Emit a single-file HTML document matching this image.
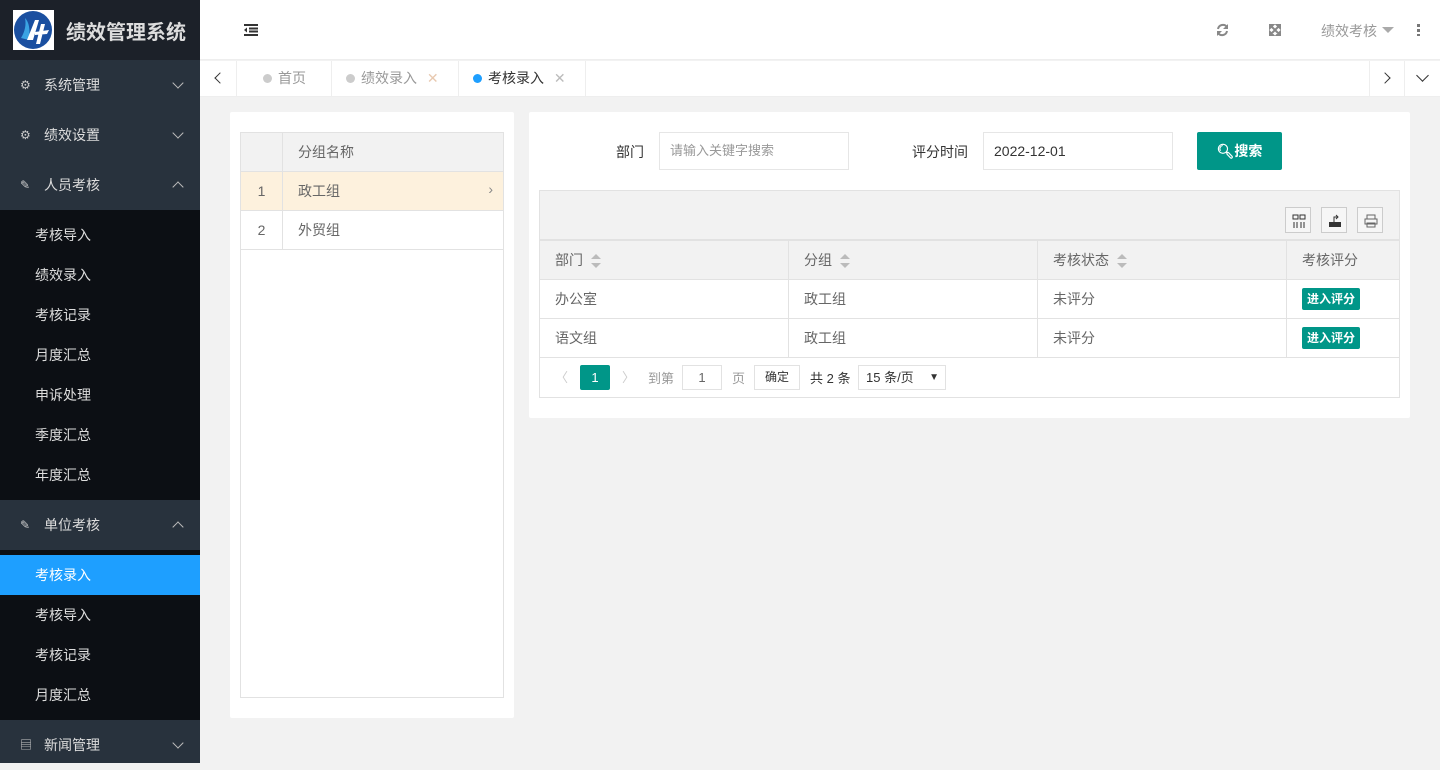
<!DOCTYPE html>
<html><head><meta charset="utf-8"><style>
*{box-sizing:border-box;margin:0;padding:0}
body{width:1440px;height:763px;overflow:hidden;font-family:"Liberation Sans","Noto Sans CJK SC",sans-serif;font-size:14px;background:#f2f2f2;position:relative;color:#666}
.side{position:absolute;left:0;top:0;width:200px;height:763px;background:#28323d}
.logo{height:60px;background:#1c2129;display:flex;align-items:center;padding-left:13px}
.logo .img{width:41px;height:40px;background:#fff;position:relative;overflow:hidden}
.logo span{color:#ddd;font-size:20px;font-weight:bold;margin-left:12px;letter-spacing:0}
.par{height:50px;display:flex;align-items:center;padding-left:20px;color:#ddd;position:relative}
.par i{display:inline-block;width:12px;height:12px;margin-right:12px;color:#ccc;font-style:normal;font-size:12px;line-height:12px}
.par .ar{position:absolute;right:18px;top:19px;width:8px;height:8px;border-right:1px solid #bbb;border-bottom:1px solid #bbb;transform:rotate(45deg)}
.par .up{top:23px;transform:rotate(-135deg)}
.sub{background:#0c0f14;padding:5px 0}
.sub div{height:40px;line-height:40px;padding-left:35px;color:#ddd}
.sub .act{background:#1e9fff;color:#fff}
.top{position:absolute;left:200px;top:0;right:0;height:60px;background:#fff;border-bottom:1px solid #eee}
.tabs{position:absolute;left:200px;top:61px;right:0;height:36px;background:#fff;border-bottom:1px solid #eee}
.tab{position:absolute;top:0;height:35px;line-height:35px;color:#999;font-size:14px;border-right:1px solid #eee}
.dot{display:inline-block;width:9px;height:9px;border-radius:50%;background:#ccc;margin-right:6px}
.card{position:absolute;background:#fff;border-radius:2px}
table{border-collapse:collapse}
td,th{border:1px solid #e2e2e2;font-weight:normal;text-align:left;color:#666;height:39px}
.btn{display:inline-block;background:#009688;color:#fff;font-size:12px;font-weight:bold;padding:0 5px;height:22px;line-height:22px;border-radius:2px}
.inp{position:absolute;height:38px;border:1px solid #e6e6e6;line-height:36px;padding-left:10px}
.sort{display:inline-block;vertical-align:middle;margin-left:8px;width:10px;height:14px;position:relative}
.sort:before{content:"";position:absolute;top:0;left:0;border:5px solid transparent;border-bottom:5px solid #bbb;border-top:0}
.sort:after{content:"";position:absolute;bottom:0;left:0;border:5px solid transparent;border-top:5px solid #bbb;border-bottom:0}
.ib{position:absolute;top:16px;width:26px;height:26px;border:1px solid #ccc;background:#f6f6f6}
.ib svg{position:absolute;left:6px;top:6px}
</style></head><body>
<div class="side">
 <div class="logo"><div class="img"><svg width="41" height="40"><circle cx="20" cy="20" r="19" fill="#1a4fa0"/><path d="M8 28 Q14 18 12 8 Q18 14 16 30Z" fill="#3aa3e3"/><path d="M14 30 L22 10 L26 10 L20 30Z M22 22 L36 20 L34 24 L22 25Z M28 14 L32 14 L27 34 L23 34Z" fill="#fff"/></svg></div><span>绩效管理系统</span></div>
 <div class="par"><i>⚙</i>系统管理<b class="ar"></b></div>
 <div class="par"><i>⚙</i>绩效设置<b class="ar"></b></div>
 <div class="par"><i>✎</i>人员考核<b class="ar up"></b></div>
 <div class="sub"><div>考核导入</div><div>绩效录入</div><div>考核记录</div><div>月度汇总</div><div>申诉处理</div><div>季度汇总</div><div>年度汇总</div></div>
 <div class="par"><i>✎</i>单位考核<b class="ar up"></b></div>
 <div class="sub"><div class="act">考核录入</div><div>考核导入</div><div>考核记录</div><div>月度汇总</div></div>
 <div class="par"><i>▤</i>新闻管理<b class="ar"></b></div>
</div>
<div class="top">
 <svg style="position:absolute;left:44px;top:24px" width="14" height="12"><path d="M0 1h14M5 4.5h9M5 7.5h9M0 11h14" stroke="#333" stroke-width="2"/><path d="M0 6l3-2.5v5z" fill="#333"/></svg>
 <svg style="position:absolute;left:1016px;top:23px" width="13" height="14"><path d="M2 6a5 5 0 0 1 9-2M11 8a5 5 0 0 1-9 2" stroke="#888" stroke-width="2" fill="none"/><path d="M12 1v5h-5zM1 13v-5h5z" fill="#888"/></svg>
 <svg style="position:absolute;left:1069px;top:24px" width="12" height="12"><path d="M0 0h5l-5 5zM12 0v5l-5-5zM0 12v-5l5 5zM12 12h-5l5-5z M2 2l8 8M10 2l-8 8" fill="#888" stroke="#888" stroke-width="2"/></svg>
 <span style="position:absolute;left:1121px;top:21px;color:#999;font-size:14px">绩效考核</span>
 <span style="position:absolute;left:1182px;top:27px;border:6px solid transparent;border-top:6px solid #aaa"></span>
 <span style="position:absolute;left:1217px;top:24px;width:3px;height:12px;background:repeating-linear-gradient(#777 0 3px,transparent 3px 5px)"></span>
</div>
<div class="tabs">
 <div class="tab" style="left:0;width:37px"><span style="position:absolute;left:16px;top:13px;width:8px;height:8px;border-left:1.5px solid #333;border-bottom:1.5px solid #333;transform:rotate(45deg)"></span></div>
 <div class="tab" style="left:37px;width:95px;padding-left:26px"><span class="dot"></span>首页</div>
 <div class="tab" style="left:132px;width:127px;padding-left:14px"><span class="dot"></span>绩效录入 <span style="color:#e8c9b0;margin-left:6px">✕</span></div>
 <div class="tab" style="left:259px;width:127px;padding-left:14px;color:#333"><span class="dot" style="background:#1e9fff"></span>考核录入 <span style="color:#bbb;margin-left:6px">✕</span></div>
 <div class="tab" style="left:1169px;width:36px;border-left:1px solid #eee"><span style="position:absolute;left:11px;top:13px;width:8px;height:8px;border-right:1.5px solid #333;border-top:1.5px solid #333;transform:rotate(45deg)"></span></div>
 <div class="tab" style="left:1205px;width:35px;border-right:0"><span style="position:absolute;left:13px;top:10px;width:9px;height:9px;border-right:1.5px solid #333;border-bottom:1.5px solid #333;transform:rotate(45deg)"></span></div>
</div>
<div class="card" style="left:230px;top:112px;width:284px;height:606px">
 <table style="position:absolute;left:10px;top:20px;width:264px">
  <tr style="background:#f2f2f2"><th style="width:42px"></th><th style="padding-left:15px">分组名称</th></tr>
  <tr style="background:#fdf1dd"><td style="text-align:center">1</td><td style="padding-left:15px;position:relative">政工组<span style="position:absolute;right:10px;color:#888">›</span></td></tr>
  <tr><td style="text-align:center">2</td><td style="padding-left:15px">外贸组</td></tr>
 </table>
 <div style="position:absolute;left:10px;top:137px;width:264px;height:449px;border:1px solid #e2e2e2;border-top:0"></div>
</div>
<div class="card" style="left:529px;top:112px;width:881px;height:306px">
 <span style="position:absolute;left:87px;top:30px;color:#333">部门</span>
 <div class="inp" style="left:130px;top:20px;width:190px;color:#999;font-size:13px">请输入关键字搜索</div>
 <span style="position:absolute;left:383px;top:30px;color:#333">评分时间</span>
 <div class="inp" style="left:454px;top:20px;width:190px;color:#333">2022-12-01</div>
 <div style="position:absolute;left:668px;top:20px;width:85px;height:38px;background:#009688;color:#fff;border-radius:2px;line-height:38px;text-align:center;font-weight:bold">&#x1F50D;&#xFE0E;搜索</div>
 <div style="position:absolute;left:10px;top:78px;width:861px;height:50px;background:#f2f2f2;border:1px solid #e2e2e2">
  <div class="ib" style="left:745px"><svg width="14" height="14"><path d="M1 1h5v4h-5zM8 1h5v4h-5zM2 8v6M5 8v6M9 8v6M12 8v6" stroke="#333" fill="none"/></svg></div>
  <div class="ib" style="left:781px"><svg width="14" height="14"><path d="M1 8h12v5h-12z" fill="#333"/><path d="M6 8v-5h4M8 1l2 2-2 2" stroke="#333" fill="none"/></svg></div>
  <div class="ib" style="left:817px"><svg width="14" height="14"><path d="M3 5v-4h8v4M1 5h12v5h-12zM3 9h8v4h-8z" stroke="#666" fill="none"/></svg></div>
 </div>
 <table style="position:absolute;left:10px;top:128px;width:861px">
  <tr style="background:#f2f2f2"><th style="width:249px;padding-left:15px">部门<span class="sort"></span></th><th style="width:249px;padding-left:15px">分组<span class="sort"></span></th><th style="width:249px;padding-left:15px">考核状态<span class="sort"></span></th><th style="padding-left:15px">考核评分</th></tr>
  <tr><td style="padding-left:15px">办公室</td><td style="padding-left:15px">政工组</td><td style="padding-left:15px">未评分</td><td style="padding-left:15px"><span class="btn">进入评分</span></td></tr>
  <tr><td style="padding-left:15px">语文组</td><td style="padding-left:15px">政工组</td><td style="padding-left:15px">未评分</td><td style="padding-left:15px"><span class="btn">进入评分</span></td></tr>
 </table>
 <div style="position:absolute;left:10px;top:245px;width:861px;height:41px;border:1px solid #e2e2e2;border-top:0;font-size:13px">
  <span style="position:absolute;left:15px;top:10px;color:#ccc">〈</span>
  <span style="position:absolute;left:40px;top:8px;width:30px;height:25px;background:#009688;color:#fff;text-align:center;line-height:25px;border-radius:2px">1</span>
  <span style="position:absolute;left:82px;top:10px;color:#ccc">〉</span>
  <span style="position:absolute;left:108px;top:11px;color:#999">到第</span>
  <span style="position:absolute;left:142px;top:8px;width:40px;height:25px;border:1px solid #e2e2e2;text-align:center;line-height:23px">1</span>
  <span style="position:absolute;left:192px;top:11px;color:#999">页</span>
  <span style="position:absolute;left:214px;top:8px;width:46px;height:25px;border:1px solid #e2e2e2;text-align:center;line-height:23px;color:#333;font-size:12px">确定</span>
  <span style="position:absolute;left:270px;top:11px;color:#333">共 2 条</span>
  <span style="position:absolute;left:318px;top:8px;width:88px;height:25px;border:1px solid #e2e2e2;line-height:23px;padding-left:7px;color:#333">15 条/页<span style="position:absolute;right:6px;font-size:10px">▼</span></span>
 </div>
</div>
</body></html>
